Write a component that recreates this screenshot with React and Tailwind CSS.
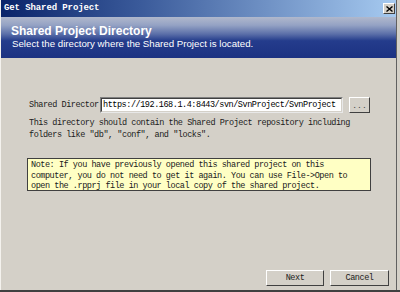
export default function App() {
  const mono = { fontFamily: '"Liberation Mono", "DejaVu Sans Mono", monospace' };
  return (
    <div className="w-[400px] h-[292px] bg-[#d4d0c8] overflow-hidden flex flex-row border-b-2 border-b-[#404040]">
      <div className="w-[396px] flex flex-col border-l border-l-[#f4f2ee]">
        {/* title bar */}
        <div className="h-[17px] flex items-center justify-between pl-[3px] pr-[1px] bg-[linear-gradient(to_right,#0a246a_0%,#3a5a9a_35%,#a6caf0_100%)]">
          <span style={mono} className="text-[9px] font-bold text-white tracking-[-0.1px] leading-none">Get Shared Project</span>
          <div className="w-[12px] h-[11px] bg-[#d4d0c8] border border-t-white border-l-white border-r-[#404040] border-b-[#404040] flex items-center justify-center">
            <svg width="7" height="6" viewBox="0 0 7 6"><path d="M0.5 0.5 L6.5 5.5 M6.5 0.5 L0.5 5.5" stroke="#000" strokeWidth="1.4" /></svg>
          </div>
        </div>
        {/* header */}
        <div className="h-[41px] flex flex-col pl-[10px] pt-[8px] bg-[linear-gradient(to_bottom,#b0b8cc_0%,#94a2c4_20%,#5a6ea8_42%,#243c8c_58%,#1c3282_100%)]" style={{ fontFamily: '"Liberation Sans", Arial, sans-serif' }}>
          <span className="text-[12px] font-bold text-white leading-[13px]">Shared Project Directory</span>
          <span className="text-[9.7px] text-white leading-[12px] pl-[1px]">Select the directory where the Shared Project is located.</span>
        </div>
        {/* body */}
        <div className="flex-1 flex flex-col pl-[26px]" style={mono}>
          <div className="mt-[39px] flex items-center h-[16px]">
            <span className="text-[8.5px] tracking-[-0.45px] text-[#202020] w-[73px] pl-[2px]">Shared Director</span>
            <div className="w-[243px] h-[16px] bg-white border border-t-[#808080] border-l-[#808080] border-r-[#e8e8e8] border-b-[#e8e8e8] flex items-center">
              <div className="w-full h-full border border-t-[#404040] border-l-[#404040] border-r-[#d4d0c8] border-b-[#d4d0c8] flex items-center pl-[1px]">
                <span className="text-[8.5px] tracking-[-0.45px] text-black whitespace-nowrap">https://192.168.1.4:8443/svn/SvnProject/SvnProject</span>
              </div>
            </div>
            <div className="ml-[6px] w-[21px] h-[16px] border border-t-white border-l-white border-r-[#404040] border-b-[#404040] flex items-center justify-center">
              <span className="text-[8px] text-[#404040] leading-none mt-[2px]">...</span>
            </div>
          </div>
          <div className="mt-[4px] text-[8.5px] tracking-[-0.45px] leading-[12px] text-[#202020] pl-[2px]">
            <div>This directory should contain the Shared Project repository including</div>
            <div>folders like "db", "conf", and "locks".</div>
          </div>
          <div className="mt-[17px] w-[344px] h-[33px] bg-[#ffffc4] border border-[#404040] pl-[3px] pt-[1px] text-[8.5px] tracking-[-0.45px] leading-[10.5px] text-[#202020]">
            <div>Note: If you have previously opened this shared project on this</div>
            <div>computer, you do not need to get it again. You can use File-&gt;Open to</div>
            <div>open the .rpprj file in your local copy of the shared project.</div>
          </div>
          <div className="flex-1" />
          <div className="flex justify-end gap-[6px] mb-[4px] pr-[7px]">
            <div className="w-[58px] h-[16px] border border-t-white border-l-white border-r-[#404040] border-b-[#404040] flex items-center justify-center text-[8.5px] tracking-[-0.45px] text-[#202020]">Next</div>
            <div className="w-[59px] h-[16px] border border-t-white border-l-white border-r-[#404040] border-b-[#404040] flex items-center justify-center text-[8.5px] tracking-[-0.45px] text-[#202020]">Cancel</div>
          </div>
        </div>
      </div>
      <div className="w-px bg-[#606060]" />
      <div className="flex-1 bg-[#d4d0c8]" />
    </div>
  );
}
